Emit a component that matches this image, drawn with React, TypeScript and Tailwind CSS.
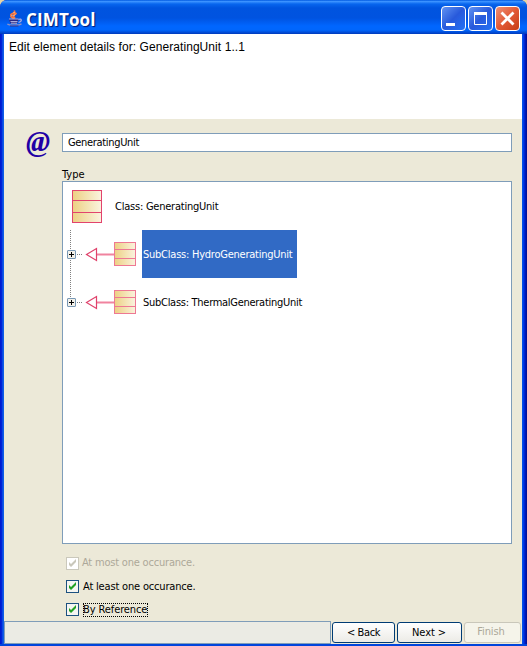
import React from "react";

const ui = "font-['DejaVu_Sans_Condensed','DejaVu_Sans',sans-serif] [font-stretch:condensed] text-[11px] leading-[14px] whitespace-nowrap";

function JavaIcon() {
  return (
    <svg width="16" height="17" viewBox="0 0 16 17" fill="none" className="shrink-0">
      <path d="M7.5 0.5v2L4 4.5v2l2.5 2M9.5 3 6.5 5.5v1L8 8.5" stroke="#ff7a3c" strokeWidth="1.7" />
      <path d="M7 2v1M5 5v1M8 4.5 6.5 6" stroke="#ffd0b0" strokeWidth=".9" />
      <path d="M2 9h9.5l-1 3.5-1.5 1.5H4.5L3 12.5Z" fill="#2b2a86" />
      <path d="M2 9h9.5M3.5 11.5h7M11.5 9.5c3.5-1.5 4 2 0 3" stroke="#a9abdc" strokeWidth="1.2" />
      <path d="M4 13.2h6" stroke="#c4c6e6" strokeWidth=".9" />
      <path d="M0.5 13.8c1 1.8 12 1.8 14 0" stroke="#8e90c4" strokeWidth="1.3" />
      <path d="M3 16h8.5" stroke="#33328c" strokeWidth="1" />
    </svg>
  );
}

function ClassIcon({ large = false }: { large?: boolean }) {
  const w = large ? 30 : 22;
  const h = large ? 33 : 24;
  const lines = large ? [10.5, 22.5] : [7.5, 16.5];
  const id = large ? "goldLarge" : "goldSmall";
  const c = large ? "#e2436d" : "#ee7893";
  return (
    <svg width={w} height={h} viewBox={`0 0 ${w} ${h}`} className="shrink-0">
      <defs>
        <linearGradient id={id}>
          <stop stopColor="#edd083" />
          <stop offset="1" stopColor="#faf3df" />
        </linearGradient>
      </defs>
      <rect x=".5" y=".5" width={w - 1} height={h - 1} fill={`url(#${id})`} stroke={c} />
      {lines.map((y) => (
        <path key={y} d={`M0 ${y}H${w}`} stroke={c} />
      ))}
    </svg>
  );
}

function Branch({ last = false }: { last?: boolean }) {
  return (
    <svg width="51" height="48" viewBox="0 0 51 48" fill="none" className="shrink-0">
      <path d={last ? "M7.5 0V24" : "M7.5 0V48"} stroke="#808080" strokeDasharray="1 1" />
      <path d="M14 24.5h6" stroke="#808080" strokeDasharray="1 1" />
      <rect x="4.5" y="20.5" width="8" height="8" rx=".5" fill="#f2f0e9" stroke="#7898b5" />
      <path d="M6 24.5h5M8.5 22v5" stroke="#000" />
      <path d="M34 24.5h17" stroke="#f0839f" strokeWidth="2" />
      <path d="M33.5 18.5v12L23.5 24.5Z" fill="#fff" stroke="#e0426c" strokeWidth="1.2" />
    </svg>
  );
}

function Check({ disabled = false }: { disabled?: boolean }) {
  return (
    <svg width="13" height="13" viewBox="0 0 13 13" className="shrink-0">
      <rect x=".5" y=".5" width="12" height="12" fill={disabled ? "#fff" : "#f5f5f1"} stroke={disabled ? "#cac8bb" : "#1c5180"} />
      <path d="M3 5v3l2 2 5-5V2L5 7Z" fill={disabled ? "#c9c7ba" : "#21a121"} />
    </svg>
  );
}

function TitleButton({ kind }: { kind: "min" | "max" | "close" }) {
  return (
    <div className={`h-[25px] w-[25px] rounded-[4px] border border-white bg-linear-to-br ${kind === "close" ? "from-[#ee9075] via-[#e25935] to-[#c63d12]" : "from-[#6292f2] via-[#2859db] to-[#2472f5]"}`}>
      <svg width="23" height="23" viewBox="0 0 23 23" fill="none" stroke="#fff">
        {kind === "min" && <path d="M4 17.5h9" strokeWidth="3" />}
        {kind === "max" && <path d="M5.5 6.5h12v11h-12z" strokeWidth="1" />}
        {kind === "max" && <path d="M5 6.5h13" strokeWidth="3" />}
        {kind === "close" && <path d="m5.5 5.5 12 12m0-12-12 12" strokeWidth="2.8" />}
      </svg>
    </div>
  );
}

export default function App() {
  return (
    <div className="flex h-[646px] w-[527px] flex-col overflow-hidden bg-[#e5d5a5]">
      <div className="flex h-full flex-col overflow-hidden rounded-t-[7px] bg-linear-to-r from-[#0019cf] via-[#0855dd] to-[#00139c]">
        <header className="flex h-[34px] shrink-0 items-start bg-[linear-gradient(180deg,#0058e0_0,#3b92ff_1.5px,#0866ee_4px,#0054df_8px,#0053e0_18px,#0066ff_26px,#0066fc_30px,#0045cd_33px,#0039b8_34px)] pl-[7px] pr-[7px]">
          <div className="pt-[10px]"><JavaIcon /></div>
          <h1 className="ml-[3px] mt-[8px] w-[72px] whitespace-nowrap font-['Open_Sans','Noto_Sans',sans-serif] text-[17px] font-bold leading-[23px] tracking-[0.15px] text-white [text-shadow:1px_1px_1px_#001a75]">CIMTool</h1>
          <div className="ml-auto mt-[6px] flex gap-[2px]">
            <TitleButton kind="min" />
            <TitleButton kind="max" />
            <TitleButton kind="close" />
          </div>
        </header>
        <div className="flex min-h-0 flex-1 border-b-[2px] border-b-[#0045dc] bg-[linear-gradient(90deg,#0015ce_0,#0029da_2px,#1665ed_3px,#0855dd_4px,#0855dd_522px,#004bf0_523px,#002de0_524px,#0014a8_526px,#00108c_527px)] pl-[4px] pr-[5px]">
          <main className="flex min-w-0 flex-1 flex-col bg-[#ece9d8]">
            <section className="h-[85px] shrink-0 bg-white pl-[5px] pt-[5px]">
              <p className="whitespace-nowrap font-['Liberation_Sans',Arial,sans-serif] text-[12px] leading-[16px] tracking-[0.07px] text-black">Edit element details for: GeneratingUnit 1..1</p>
            </section>
            <section className="flex h-[48px] shrink-0 items-start pt-[14px]">
              <div className="-mt-[4px] flex h-[24px] w-[58px] items-center pl-[22px] font-['Liberation_Serif',serif] text-[29px] font-bold italic leading-none text-[#2100a5]">@</div>
              <div className={`${ui} h-[19px] w-[450px] border border-[#7f9db9] bg-white pl-[5px] pt-[2px] tracking-[-0.33px] text-black`}>GeneratingUnit</div>
            </section>
            <section className="ml-[58px] w-[450px]">
              <div className={`${ui} h-[14px] pt-px`}>Type</div>
              <div className="h-[363px] border border-[#7f9db9] bg-white">
                <div className="flex h-[48px] items-center pl-[9px]">
                  <ClassIcon large />
                  <span className={`${ui} ml-[13px] pt-[2px] tracking-[-0.23px]`}>Class: GeneratingUnit</span>
                </div>
                <div className="flex h-[48px] items-center">
                  <Branch />
                  <ClassIcon />
                  <span className={`${ui} ml-[6px] flex h-[48px] w-[155px] items-center bg-[#316ac5] pl-px pt-[2px] tracking-[-0.24px] text-white`}>SubClass: HydroGeneratingUnit</span>
                </div>
                <div className="flex h-[48px] items-center">
                  <Branch last />
                  <ClassIcon />
                  <span className={`${ui} ml-[7px] pt-[2px] tracking-[-0.28px]`}>SubClass: ThermalGeneratingUnit</span>
                </div>
              </div>
            </section>
            <section className="ml-[62px] pt-[8px]">
              <div className="flex h-[23px] items-center gap-[3px] text-[#aca899]"><Check disabled /><span className={`${ui} pb-[2px] tracking-[-0.2px]`}>At most one occurance.</span></div>
              <div className="flex h-[23px] items-center gap-[4px]"><Check /><span className={`${ui} tracking-[-0.18px]`}>At least one occurance.</span></div>
              <div className="flex h-[23px] items-center gap-[4px]"><Check /><span className={`${ui} w-[65px] tracking-[-0.1px] outline-1 outline-dotted -outline-offset-1 outline-black`}>By Reference</span></div>
            </section>
            <footer className="mt-auto flex h-[23px] items-start">
              <div className="h-[23px] w-[327px] border border-[#7f9db9] bg-[#ebebe4]" />
              <div className={`${ui} ml-px mt-px flex h-[21px] w-[63px] items-center justify-center rounded-[3px] border border-[#003c74] bg-linear-to-b from-white to-[#ecebe6] tracking-[-0.4px]`}>&lt; Back</div>
              <div className={`${ui} ml-[2px] mt-px flex h-[21px] w-[65px] items-center justify-center rounded-[3px] border border-[#003c74] bg-linear-to-b from-white to-[#ecebe6] pr-px tracking-[-0.1px]`}>Next &gt;</div>
              <div className={`${ui} ml-[2px] mt-px flex h-[21px] w-[57px] items-center justify-center rounded-[3px] border border-[#c9c7ba] bg-[#f5f4ea] pb-[2px] pr-[3px] tracking-[-0.1px] text-[#aca899]`}>Finish</div>
            </footer>
          </main>
        </div>
      </div>
    </div>
  );
}
